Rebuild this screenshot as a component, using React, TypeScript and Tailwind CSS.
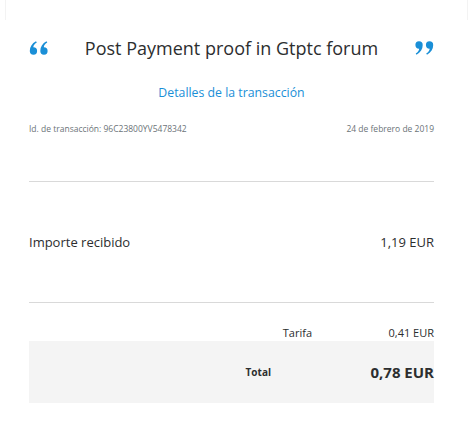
function Quote({ open }: { open?: boolean }) {
  const comma = 'M4 0.3 A3.7 3.7 0 0 1 7.7 4 C7.7 8 5.6 11.6 1.5 13.7 L0.7 12.4 C3 11 4 9.6 4.2 7.7 A3.7 3.7 0 0 1 4 0.3 Z'
  return (
    <svg width="19" height="14" viewBox="0 0 19 14" className="shrink-0 text-[#1a8fd7]" style={open ? { transform: 'rotate(180deg)' } : undefined}>
      <path d={comma} fill="currentColor" />
      <path d={comma} fill="currentColor" transform="translate(10.5 0)" />
    </svg>
  )
}

export default function App() {
  return (
    <div className="min-h-[421px] w-full bg-white font-['Open_Sans','Liberation_Sans',sans-serif] text-[#2c2e2f]">
      <div className="mx-[5px] h-[20px] border-x border-[#f3f3f3]" />
      <div className="pl-[29px] pr-[39px]">
        <div className="mt-[14px] flex h-[28px] items-center justify-between">
          <Quote open />
          <h1 className="text-[18px] leading-[28px] text-[#2c2e2f]">Post Payment proof in Gtptc forum</h1>
          <Quote />
        </div>
        <div className="mt-[22px] text-center text-[12.3px] leading-[18px] text-[#1a8fd7]">Detalles de la transacción</div>
        <div className="mt-[21px] flex justify-between text-[8.5px] leading-[12px] text-[#6c7378]">
          <span>Id. de transacción: 96C23800YV5478342</span>
          <span>24 de febrero de 2019</span>
        </div>
        <div className="mt-[46px] h-px bg-[#d9d9d9]" />
        <div className="mt-[51px] flex justify-between text-[13px] leading-[18px]">
          <span>Importe recibido</span>
          <span>1,19 EUR</span>
        </div>
        <div className="mt-[51px] h-px bg-[#d9d9d9]" />
        <div className="mt-[22px] flex justify-end text-[11px] leading-[16px]">
          <span>Tarifa</span>
          <span className="w-[122px] text-right">0,41 EUR</span>
        </div>
        <div className="flex h-[62px] items-center justify-end bg-[#f4f4f4]">
          <span className="text-[10px] font-bold">Total</span>
          <span className="w-[163px] text-right text-[15px] font-bold">0,78 EUR</span>
        </div>
      </div>
    </div>
  )
}
